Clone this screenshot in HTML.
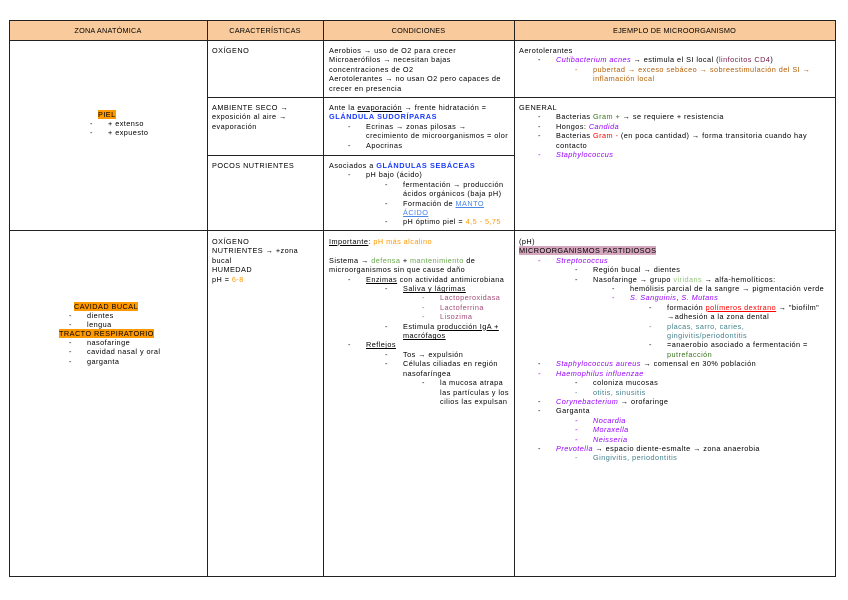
<!DOCTYPE html>
<html><head><meta charset="utf-8"><style>
*{margin:0;padding:0;box-sizing:border-box}
body{width:848px;height:600px;background:#fff;position:relative;font-family:"Liberation Sans",sans-serif;font-size:7.3px;line-height:9.4px;color:#000;letter-spacing:0.45px;overflow:hidden}
.ln{position:absolute;background:#222}
.h{position:absolute;left:9px;top:20px;width:827px;height:20px;background:#f9cb9c}
.ht{position:absolute;top:26px;text-align:center;font-size:7.3px;letter-spacing:0.2px}
.c{position:absolute}
.b{position:relative}
.b::before{content:"-";position:absolute;left:-18px}
.l1{margin-left:37px}.l2{margin-left:74px}.l3{margin-left:111px}
.p{color:#9900ff;font-style:italic}
.or{color:#ff9900}
.br{color:#b45f06}
.gr{color:#38761d}
.lg{color:#6aa84f}
.vg{color:#93c47d}
.rd{color:#ff0000}
.pk{color:#a64d79}
.tl{color:#45818e}
.bl{color:#1a3bff;font-weight:bold;letter-spacing:0.6px}
.lb{color:#4a86e8;text-decoration:underline}
.u{text-decoration:underline}
.mr{color:#741b47}
.pb::before{color:#9900ff}
.tb::before{color:#45818e}
.pkb::before{color:#a64d79}
.brb::before{color:#b45f06}
</style></head><body>
<div class="h"></div>
<div class="ln" style="left:9px;top:20px;width:827px;height:1px"></div>
<div class="ln" style="left:9px;top:40px;width:827px;height:1px"></div>
<div class="ln" style="left:207px;top:97px;width:629px;height:1px"></div>
<div class="ln" style="left:207px;top:155px;width:307px;height:1px"></div>
<div class="ln" style="left:9px;top:230px;width:827px;height:1px"></div>
<div class="ln" style="left:9px;top:576px;width:827px;height:1px"></div>
<div class="ln" style="left:9px;top:20px;width:1px;height:557px"></div>
<div class="ln" style="left:207px;top:20px;width:1px;height:557px"></div>
<div class="ln" style="left:323px;top:20px;width:1px;height:557px"></div>
<div class="ln" style="left:514px;top:20px;width:1px;height:557px"></div>
<div class="ln" style="left:835px;top:20px;width:1px;height:557px"></div>

<div class="ht" style="left:9px;width:198px">ZONA ANATÓMICA</div>
<div class="ht" style="left:207px;width:116px">CARACTERÍSTICAS</div>
<div class="ht" style="left:323px;width:191px">CONDICIONES</div>
<div class="ht" style="left:514px;width:321px">EJEMPLO DE MICROORGANISMO</div>

<div class="c" style="left:98px;top:110px"><span style="background:#ff9900">PIEL</span></div>
<div class="c" style="left:108px;top:119px"><div class="b">+ extenso</div><div class="b">+ expuesto</div></div>
<div class="c" style="left:74px;top:302px"><span style="background:#ff9900">CAVIDAD BUCAL</span></div>
<div class="c" style="left:87px;top:311px"><div class="b">dientes</div><div class="b">lengua</div></div>
<div class="c" style="left:59px;top:329px"><span style="background:#ff9900">TRACTO RESPIRATORIO</span></div>
<div class="c" style="left:87px;top:338px"><div class="b">nasofaringe</div><div class="b">cavidad nasal y oral</div><div class="b">garganta</div></div>

<div class="c" style="left:212px;top:46px">OXÍGENO</div>
<div class="c" style="left:212px;top:103px;width:105px">AMBIENTE SECO → exposición al aire → evaporación</div>
<div class="c" style="left:212px;top:161px">POCOS NUTRIENTES</div>
<div class="c" style="left:212px;top:237px;width:105px">OXÍGENO<br>NUTRIENTES → +zona bucal<br>HUMEDAD<br>pH = <span class="or">6-8</span></div>

<div class="c" style="left:329px;top:46px;width:182px">Aerobios → uso de O2 para crecer<br>Microaerófilos → necesitan bajas concentraciones de O2<br>Aerotolerantes → no usan O2 pero capaces de crecer en presencia</div>
<div class="c" style="left:329px;top:103px;width:182px">Ante la <span class="u">evaporación</span> → frente hidratación = <span class="bl">GLÁNDULA SUDORÍPARAS</span>
<div class="b l1">Ecrinas → zonas pilosas → crecimiento de microorganismos = olor</div>
<div class="b l1">Apocrinas</div></div>
<div class="c" style="left:329px;top:161px;width:182px">Asociados a <span class="bl">GLÁNDULAS SEBÁCEAS</span>
<div class="b l1">pH bajo (ácido)</div>
<div class="b l2">fermentación → producción ácidos orgánicos (baja pH)</div>
<div class="b l2">Formación de <span class="lb">MANTO ÁCIDO</span></div>
<div class="b l2">pH óptimo piel = <span class="or">4,5 - 5,75</span></div></div>
<div class="c" style="left:329px;top:237px;width:182px"><span class="u">Importante</span>: <span class="or">pH más alcalino</span><br><br>Sistema → <span class="lg">defensa</span> + <span class="lg">mantenimiento</span> de microorganismos sin que cause daño
<div class="b l1"><span class="u">Enzimas</span> con actividad antimicrobiana</div>
<div class="b l2"><span class="u">Saliva y lágrimas</span></div>
<div class="b l3 pk pkb">Lactoperoxidasa</div>
<div class="b l3 pk pkb">Lactoferrina</div>
<div class="b l3 pk pkb">Lisozima</div>
<div class="b l2">Estimula <span class="u">producción IgA + macrófagos</span></div>
<div class="b l1"><span class="u">Reflejos</span></div>
<div class="b l2">Tos → expulsión</div>
<div class="b l2">Células ciliadas en región nasofaríngea</div>
<div class="b l3">la mucosa atrapa las partículas y los cilios las expulsan</div></div>

<div class="c" style="left:519px;top:46px;width:312px">Aerotolerantes
<div class="b l1"><span class="p">Cutibacterium acnes</span> → estimula el SI local (<span class="mr">linfocitos CD4</span>)</div>
<div class="b l2 br brb">pubertad → exceso sebáceo → sobreestimulación del SI → inflamación local</div></div>
<div class="c" style="left:519px;top:103px;width:312px">GENERAL
<div class="b l1">Bacterias <span class="gr">Gram +</span> → se requiere + resistencia</div>
<div class="b l1">Hongos: <span class="p">Candida</span></div>
<div class="b l1">Bacterias <span class="rd">Gram -</span> (en poca cantidad) → forma transitoria cuando hay contacto</div>
<div class="b l1 p pb">Staphylococcus</div></div>
<div class="c" style="left:519px;top:237px;width:312px">(pH)<br><span style="background:#d5a6bd">MICROORGANISMOS FASTIDIOSOS</span>
<div class="b l1 p pb">Streptococcus</div>
<div class="b l2">Región bucal → dientes</div>
<div class="b l2">Nasofaringe → grupo <span class="vg">viridans</span> → alfa-hemolíticos:</div>
<div class="b l3">hemólisis parcial de la sangre → pigmentación verde</div>
<div class="b l3 pb"><span class="p">S. Sanguinis</span>, <span class="p">S. Mutans</span></div>
<div class="b" style="margin-left:148px">formación <span class="rd u">polímeros dextrano</span> → "biofilm" →adhesión a la zona dental</div>
<div class="b tl tb" style="margin-left:148px;width:115px">placas, sarro, caries, gingivitis/periodontitis</div>
<div class="b" style="margin-left:148px">=anaerobio asociado a fermentación = <span class="gr">putrefacción</span></div>
<div class="b l1"><span class="p">Staphylococcus aureus</span> → comensal en 30% población</div>
<div class="b l1 p pb">Haemophilus influenzae</div>
<div class="b l2">coloniza mucosas</div>
<div class="b l2 tl tb">otitis, sinusitis</div>
<div class="b l1"><span class="p">Corynebacterium</span> → orofaringe</div>
<div class="b l1">Garganta</div>
<div class="b l2 p pb">Nocardia</div>
<div class="b l2 p pb">Moraxella</div>
<div class="b l2 p pb">Neisseria</div>
<div class="b l1"><span class="p">Prevotella</span> → espacio diente-esmalte → zona anaerobia</div>
<div class="b l2 tl tb">Gingivitis, periodontitis</div></div>
</body></html>
